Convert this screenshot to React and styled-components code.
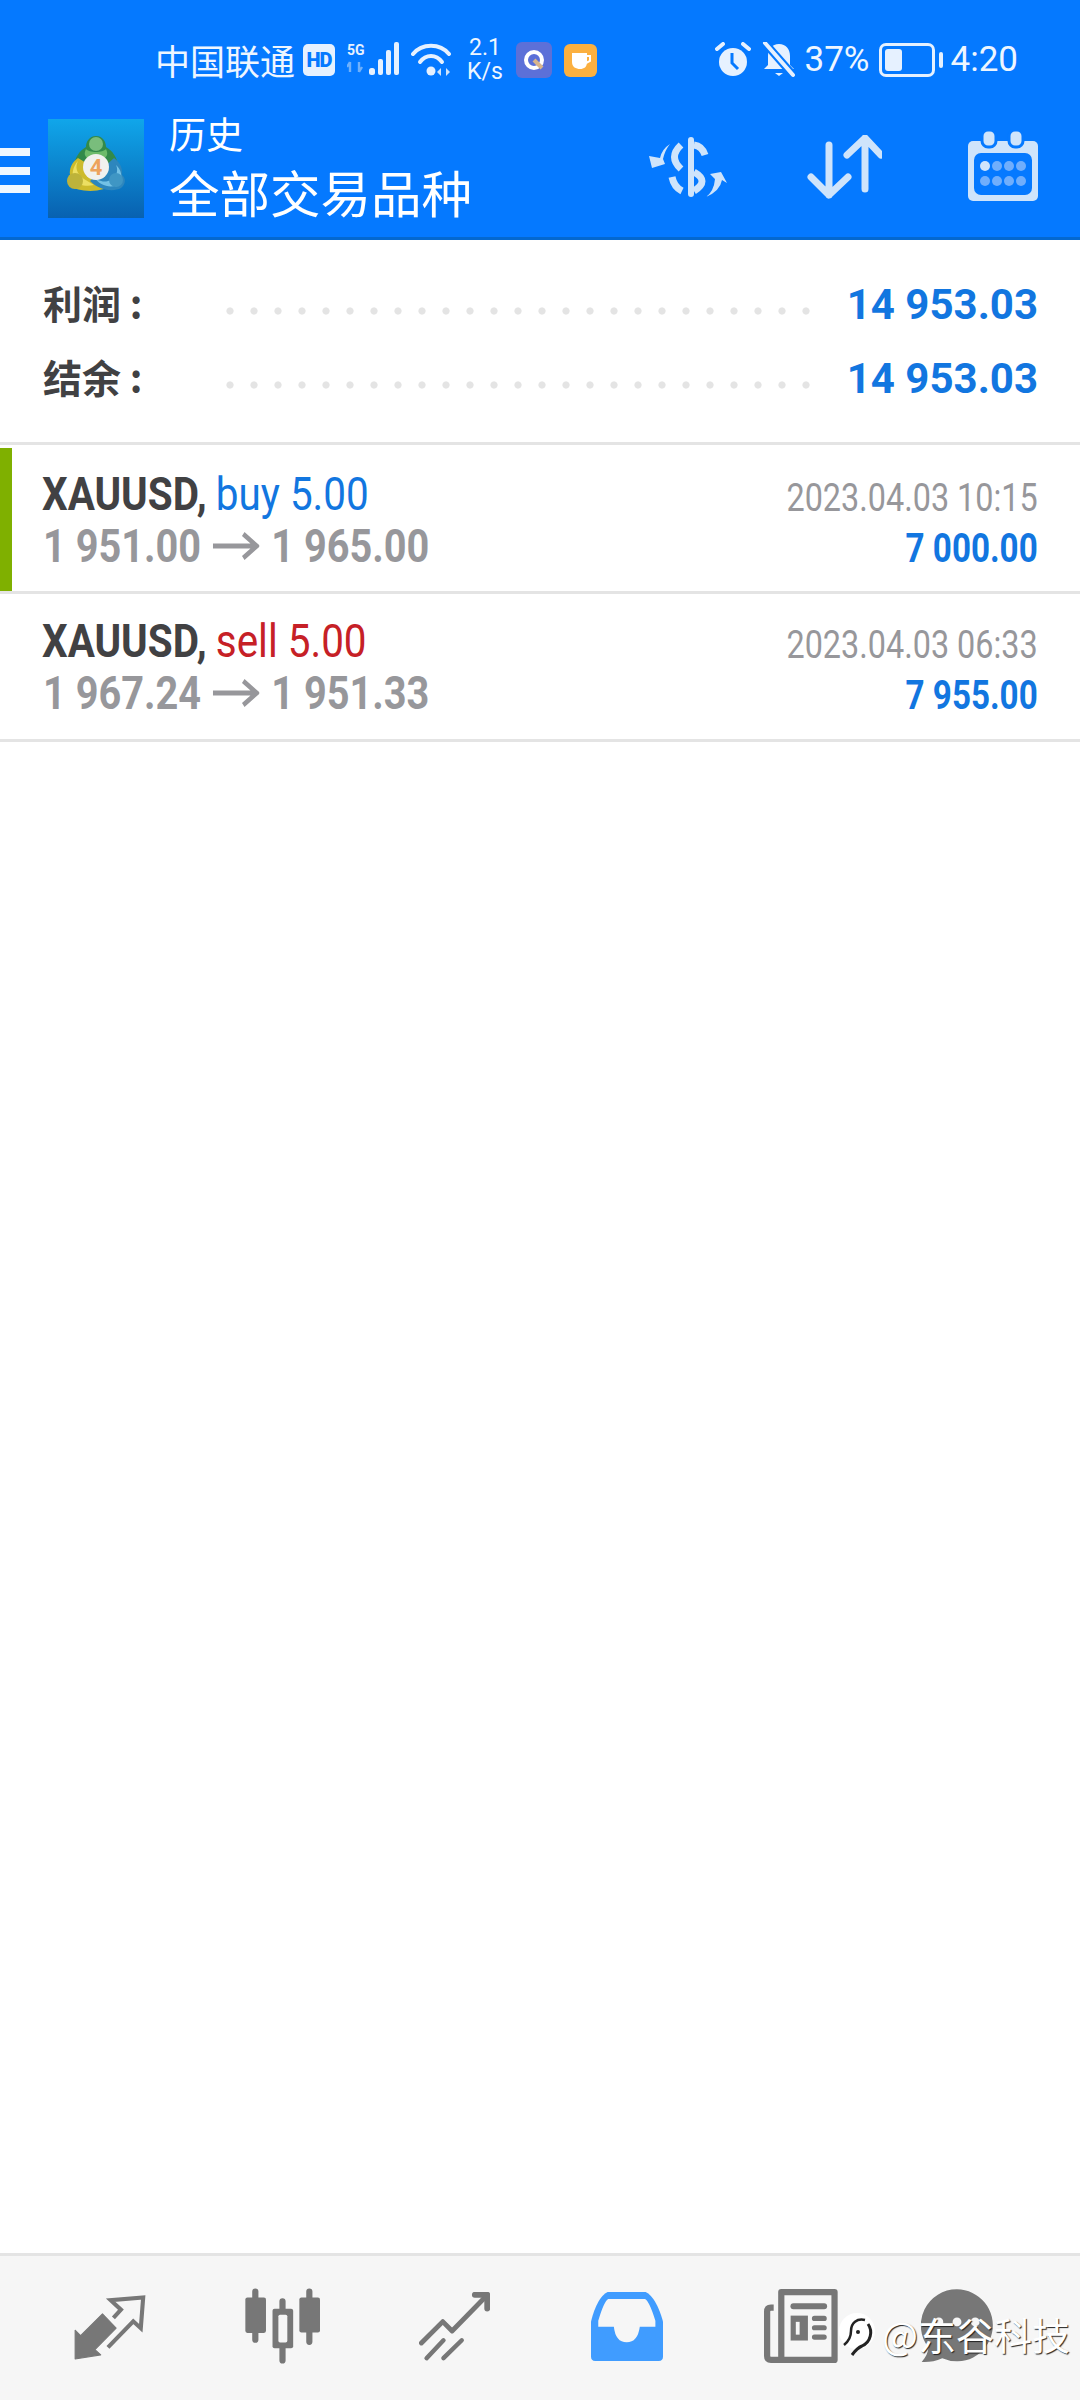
import styled, { createGlobalStyle } from "styled-components";

const Global = createGlobalStyle`
    html, body { margin: 0; padding: 0; background: #fff; }
    #root { width: 1080px; height: 2400px; }
`;

const Screen = styled.div`
    position: relative;
    width: 1080px;
    height: 2400px;
    display: flex;
    flex-direction: column;
    overflow: hidden;
    background: #fff;
    font-family: Roboto, "Noto Sans CJK SC", sans-serif;
`;

const Header = styled.header`
    background: #0579ff;
    height: 237px;
    flex: none;
    border-bottom: 3px solid #0468cf;
    color: #eef6ff;
`;

const StatusBar = styled.div`
    height: 100px;
    display: flex;
    align-items: center;
    justify-content: space-between;
    padding: 20px 62px 0 155px;
    box-sizing: border-box;
`;

const StatusGroup = styled.div`
    display: flex;
    align-items: center;
`;

const Carrier = styled.span`
    font-size: 35px;
    font-family: "Noto Sans CJK SC", sans-serif;
    line-height: 40px;
    margin-right: 8px;
`;

const HdBadge = styled.span`
    width: 32px;
    height: 32px;
    border-radius: 5px;
    background: #e6f1ff;
    color: #0579ff;
    font-size: 20px;
    font-weight: 900;
    line-height: 32px;
    text-align: center;
    letter-spacing: -1px;
`;

const Speed = styled.span`
    width: 40px;
    margin: 0 11px 0 12px;
    font-size: 23px;
    line-height: 24px;
    text-align: center;
`;

const AppIcon = styled.span`
    width: ${p => p.$size}px;
    height: ${p => p.$size}px;
    margin-left: ${p => p.$gap}px;
    border-radius: 6px;
    background: ${p => p.$bg};
    display: flex;
    align-items: center;
    justify-content: center;
`;

const StatusText = styled.span`
    font-size: 35px;
    line-height: 40px;
    margin: ${p => p.$margin};
`;

const Battery = styled.span`
    width: 56px;
    height: 34px;
    box-sizing: border-box;
    border: 3px solid #e6f1ff;
    border-radius: 7px;
    padding: 3px;
    position: relative;
    display: flex;
    &::after {
        content: "";
        position: absolute;
        right: -11px;
        top: 6px;
        width: 4px;
        height: 16px;
        border-radius: 2px;
        background: #e6f1ff;
    }
`;

const BatteryLevel = styled.span`
    width: 17px;
    background: #e6f1ff;
    border-radius: 3px;
`;

const Toolbar = styled.div`
    height: 137px;
    display: flex;
    align-items: center;
    position: relative;
`;

const Burger = styled.div`
    width: 30px;
    height: 45px;
    margin: 4px 18px 0 0;
    display: flex;
    flex-direction: column;
    justify-content: space-between;
    span {
        height: 8px;
        background: #f0f7ff;
    }
`;

const Titles = styled.div`
    margin-left: 25px;
    font-family: "Noto Sans CJK SC", sans-serif;
    color: #fff;
`;

const SubTitle = styled.div`
    font-size: 37px;
    line-height: 42px;
    margin-top: -5px;
`;

const MainTitle = styled.div`
    font-size: 50.5px;
    line-height: 58px;
    margin-top: 8px;
`;

const Actions = styled.div`
    margin-left: auto;
    display: flex;
    align-items: center;
    padding-right: 42px;
`;

const ActionIcon = styled.svg`
    display: block;
    margin-left: ${p => p.$gap}px;
    margin-top: ${p => p.$top}px;
`;

const Summary = styled.section`
    flex: none;
    padding: 27px 42px 27px;
    border-bottom: 3px solid #e4e4e4;
`;

const SummaryRow = styled.div`
    height: 74px;
    display: flex;
    align-items: center;
`;

const SummaryLabel = styled.span`
    width: 176px;
    margin-top: -5px;
    font-size: 39px;
    font-weight: 700;
    color: #414143;
    font-family: "Noto Sans CJK SC", sans-serif;
    white-space: nowrap;
    padding-left: 1px;
    box-sizing: border-box;
`;

const Dots = styled.span`
    width: 600px;
    height: 8px;
    margin-top: 14px;
    background-image: radial-gradient(circle, #e4e4e4 3.2px, transparent 4px);
    background-size: 24px 8px;
`;

const SummaryValue = styled.span`
    margin-left: auto;
    font-size: 42px;
    font-weight: 700;
    color: #1276e0;
    white-space: nowrap;
`;

const Deal = styled.article`
    position: relative;
    flex: none;
    box-sizing: border-box;
    height: ${p => (p.$first ? 149 : 148)}px;
    padding: ${p => (p.$first ? 23 : 21)}px 42px 0;
    border-bottom: 3px solid #e4e4e4;
    display: flex;
    justify-content: space-between;
    &::before {
        content: "";
        display: ${p => (p.$first ? "block" : "none")};
        position: absolute;
        left: 0;
        top: 3px;
        bottom: 0;
        width: 12px;
        background: #7fb000;
    }
`;

const DealLeft = styled.div`
    white-space: nowrap;
`;

const DealRight = styled.div`
    white-space: nowrap;
    padding-top: 7px;
    text-align: right;
`;

const SymbolLine = styled.div`
    font-size: 47px;
    line-height: 52px;
    transform: scaleX(0.86);
    transform-origin: left center;
`;

const Symbol = styled.b`
    color: #414143;
    font-weight: 700;
`;

const Side = styled.span`
    color: ${p => (p.$sell ? "#c62026" : "#1276e0")};
    margin-left: -1px;
`;

const PriceLine = styled.div`
    font-size: 47px;
    line-height: 52px;
    font-weight: 700;
    color: #97979b;
    transform: scaleX(0.845);
    transform-origin: left center;
    display: flex;
    align-items: center;
    margin-left: 1px;
`;

const PriceArrow = styled.svg`
    width: 55px;
    height: 30px;
    margin: 0 14px;
`;

const DealTime = styled.div`
    font-size: 39px;
    line-height: 46px;
    color: #97979b;
    transform: scaleX(0.83);
    transform-origin: right center;
`;

const DealProfit = styled.div`
    font-size: 40px;
    line-height: 56px;
    font-weight: 700;
    color: #1276e0;
    transform: scaleX(0.83);
    transform-origin: right center;
`;

const Spacer = styled.div`
    flex: 1;
`;

const BottomNav = styled.nav`
    flex: none;
    height: 105px;
    border-top: 3px solid #e4e4e4;
    background: #f6f6f6;
    display: grid;
    grid-template-columns: 172px 172px 172px 173px 176px 136px;
    padding: 39px 0 0 24px;
    align-items: start;
`;

const NavCell = styled.div`
    display: flex;
    justify-content: center;
`;

const NavIcon = styled.svg`
    display: block;
    margin-top: ${p => p.$top}px;
`;

const Watermark = styled.div`
    position: absolute;
    left: 838px;
    bottom: 42px;
    display: flex;
    align-items: center;
    color: #fff;
    font-family: "Noto Sans CJK SC", sans-serif;
    font-size: 38px;
    line-height: 48px;
    text-shadow: 1px 1px 1px #222;
    white-space: nowrap;
`;

const WatermarkMark = styled.svg`
    display: block;
    margin-right: 6px;
`;

const FG = "#cfe4fb";

const SignalIcon = () => (
    <svg width="56" height="36" viewBox="0 0 56 36" style={{ marginLeft: 12 }}>
        <text x="0" y="13" fontSize="14" fontWeight="700" fill="#e6f1ff" fontFamily="Roboto">5G</text>
        <path d="M3 30V20M0 25l3 -5M12 20v10M12 30l3 -5" stroke="#6fb0fb" strokeWidth="2.4" fill="none" />
        <g fill="#e6f1ff">
            <rect x="22" y="26" width="6" height="7" rx="2.5" />
            <rect x="31" y="17" width="5" height="16" rx="2" />
            <rect x="39" y="8" width="5" height="25" rx="2" />
            <rect x="47" y="0" width="5" height="33" rx="2" />
        </g>
    </svg>
);

const WifiIcon = () => (
    <svg width="42" height="36" viewBox="0 0 42 36" style={{ marginLeft: 8 }}>
        <g fill="none" stroke="#e6f1ff" strokeWidth="4" strokeLinecap="round">
            <path d="M2 12C11 1 29 1 38 12" />
            <path d="M9 20C15 12 25 12 31 20" />
        </g>
        <circle cx="20" cy="29" r="4.5" fill="#e6f1ff" />
        <path d="M30 26v8l-4 -4zM35 26v8l4 -4z" fill="#cfe4fb" />
    </svg>
);

const AlarmIcon = () => (
    <svg width="36" height="36" viewBox="0 0 36 36">
        <circle cx="18" cy="20" r="14" fill="#e6f1ff" />
        <path d="M17 11v10l6 6" stroke="#0579ff" strokeWidth="3" fill="none" />
        <path d="M2 7l6 -5M34 7l-6 -5" stroke="#e6f1ff" strokeWidth="4" strokeLinecap="round" />
    </svg>
);

const BellOffIcon = () => (
    <svg width="34" height="36" viewBox="0 0 34 36" style={{ marginLeft: 11 }}>
        <path d="M17 2c7 0 11 5 11 12v9l4 4H2l4-4v-9C6 7 10 2 17 2z" fill="#e6f1ff" />
        <path d="M13 31h8l-4 3z" fill="#e6f1ff" />
        <path d="M3 1l28 32" stroke="#0579ff" strokeWidth="8" />
        <path d="M3 1l28 32" stroke="#e6f1ff" strokeWidth="4" strokeLinecap="round" />
    </svg>
);

const LogoIcon = () => (
    <svg width="96" height="99" viewBox="0 0 96 99">
        <defs>
            <linearGradient id="logoBg" x1="0" y1="0" x2="0" y2="1">
                <stop offset="0" stopColor="#10a6ea" />
                <stop offset="1" stopColor="#0861b0" />
            </linearGradient>
        </defs>
        <rect width="96" height="99" fill="url(#logoBg)" />
        <path d="M48 17C55 17 58 23 58 28C65 32 69 39 70 46L48 55L26 46C27 39 31 32 38 28C38 23 41 17 48 17Z" fill="#338a4a" />
        <path d="M38 30C35 36 37 40 48 42C59 40 61 36 58 30C55 34 41 34 38 30Z" fill="#6dbb6a" />
        <circle cx="48" cy="25" r="7" fill="#79bd7c" />
        <path d="M30 39C24 43 21 50 22 56C19 58 19 64 22 67C28 71 42 74 56 70L48 50Z" fill="#cdbb2c" />
        <path d="M30 42C27 48 28 54 36 60L46 66C38 68 30 66 26 62C23 56 25 47 30 42Z" fill="#ecdf62" />
        <circle cx="27" cy="62" r="8" fill="#bdb33a" />
        <path d="M66 39C72 43 75 50 74 56C78 59 78 65 73 69C66 73 52 72 42 62L54 50Z" fill="#2d86bd" />
        <path d="M68 46C71 52 68 60 60 62C54 64 48 60 46 58C52 68 66 70 72 64C75 58 73 50 68 46Z" fill="#73c1e6" />
        <circle cx="68" cy="61" r="7" fill="#3f96c4" />
        <circle cx="48" cy="48" r="13" fill="#f1f1ee" />
        <text x="48" y="56" fontSize="22" fontWeight="700" textAnchor="middle" fill="#eda35c" fontFamily="Roboto">4</text>
    </svg>
);

const Deals = [
    { side: "buy 5.00", from: "1 951.00", to: "1 965.00", time: "2023.04.03 10:15", profit: "7 000.00", first: true },
    { side: "sell 5.00", from: "1 967.24", to: "1 951.33", time: "2023.04.03 06:33", profit: "7 955.00", sell: true },
];

const App = () => {
    return (
        <Screen>
            <Global />
            <Header>
                <StatusBar>
                    <StatusGroup>
                        <Carrier>中国联通</Carrier>
                        <HdBadge>HD</HdBadge>
                        <SignalIcon />
                        <WifiIcon />
                        <Speed>2.1<br />K/s</Speed>
                        <AppIcon $size={36} $gap={0} $bg="#5c70d8">
                            <svg width="24" height="24" viewBox="0 0 24 24">
                                <circle cx="12" cy="12" r="8" fill="none" stroke="#fff" strokeWidth="4" />
                                <path d="M12 12l8 8" stroke="#d8b58c" strokeWidth="4" />
                            </svg>
                        </AppIcon>
                        <AppIcon $size={33} $gap={12} $bg="#fbb040">
                            <svg width="24" height="24" viewBox="0 0 24 24">
                                <path d="M3 5h15v9c0 5-3 7-7 7s-8-2-8-7z" fill="#fff" />
                                <path d="M18 8h3v5l-4 2" stroke="#fff" strokeWidth="2" fill="none" />
                            </svg>
                        </AppIcon>
                    </StatusGroup>
                    <StatusGroup>
                        <AlarmIcon />
                        <BellOffIcon />
                        <StatusText $margin="0 9px 0 9px">37%</StatusText>
                        <Battery><BatteryLevel /></Battery>
                        <StatusText $margin="0 0 0 16px">4:20</StatusText>
                    </StatusGroup>
                </StatusBar>
                <Toolbar>
                    <Burger><span /><span /><span /></Burger>
                    <LogoIcon />
                    <Titles>
                        <SubTitle>历史</SubTitle>
                        <MainTitle>全部交易品种</MainTitle>
                    </Titles>
                    <Actions>
                        <ActionIcon $gap={0} $top={-3} width="80" height="64" viewBox="0 0 80 64">
                            <rect x="40" y="2" width="6" height="60" rx="3" fill={FG} />
                            <g fill="none" stroke={FG} strokeWidth="7">
                                <path d="M46 10Q54 11 57 20" />
                                <path d="M33 10Q20 22 33 34" />
                                <path d="M24 42Q26 52 34 56" />
                                <path d="M46 37Q62 46 46 56" />
                            </g>
                            <path d="M22 9Q14 14 12 23L1 21L4 33L17 29L15 24Q17 15 22 9Z" fill={FG} />
                            <path d="M58 62Q66 56 67 44L62 39L73 37L79 48L74 45Q72 56 58 62Z" fill={FG} />
                        </ActionIcon>
                        <ActionIcon $gap={78} $top={-3} width="76" height="64" viewBox="0 0 76 64" fill="none" stroke={FG} strokeWidth="7" strokeLinecap="round" strokeLinejoin="round">
                            <path d="M23 10V60M5 42L23 60L42 42" />
                            <path d="M59 3V54M41 20L59 3L75 20" />
                        </ActionIcon>
                        <ActionIcon $gap={86} $top={-6} width="70" height="72" viewBox="0 0 70 72">
                            <rect x="0" y="11" width="70" height="60" rx="5" fill={FG} />
                            <rect x="6" y="23" width="58" height="42" rx="7" fill="#0579ff" />
                            <g stroke="#0579ff" strokeWidth="3" fill={FG}>
                                <rect x="14" y="0" width="14" height="17" rx="6" />
                                <rect x="41" y="0" width="14" height="17" rx="6" />
                            </g>
                            <circle cx="17" cy="36" r="5" fill={FG} />
                            <g fill="#70aefc">
                                <circle cx="29" cy="36" r="5" />
                                <circle cx="41" cy="36" r="5" />
                                <circle cx="53" cy="36" r="5" />
                                <circle cx="17" cy="51" r="5" />
                                <circle cx="29" cy="51" r="5" />
                                <circle cx="41" cy="51" r="5" />
                                <circle cx="53" cy="51" r="5" />
                            </g>
                        </ActionIcon>
                    </Actions>
                </Toolbar>
            </Header>

            <Summary>
                <SummaryRow>
                    <SummaryLabel>利润 :</SummaryLabel>
                    <Dots />
                    <SummaryValue>14 953.03</SummaryValue>
                </SummaryRow>
                <SummaryRow>
                    <SummaryLabel>结余 :</SummaryLabel>
                    <Dots />
                    <SummaryValue>14 953.03</SummaryValue>
                </SummaryRow>
            </Summary>

            {Deals.map(d => (
                <Deal key={d.time} $first={d.first}>
                    <DealLeft>
                        <SymbolLine>
                            <Symbol>XAUUSD,</Symbol> <Side $sell={d.sell}>{d.side}</Side>
                        </SymbolLine>
                        <PriceLine>
                            <span>{d.from}</span>
                            <PriceArrow viewBox="0 0 55 30" fill="none" stroke="#97979b" strokeWidth="5">
                                <path d="M0 15H52M36 3L52 15L36 27" />
                            </PriceArrow>
                            <span>{d.to}</span>
                        </PriceLine>
                    </DealLeft>
                    <DealRight>
                        <DealTime>{d.time}</DealTime>
                        <DealProfit>{d.profit}</DealProfit>
                    </DealRight>
                </Deal>
            ))}

            <Spacer />

            <BottomNav>
                <NavCell>
                    <NavIcon $top={0} width="72" height="65" viewBox="215 165 210 190" fill="#777">
                        <path d="M218 268L234 284L298 220L338 262L276 325L293 340L218 352Z" stroke="#777" strokeWidth="3" strokeLinejoin="round" />
                        <path d="M330 232L352 208L322 180L417 172L410 262L388 242L314 318" fill="none" stroke="#777" strokeWidth="12" />
                    </NavIcon>
                </NavCell>
                <NavCell>
                    <NavIcon $top={-7} width="75" height="76" viewBox="708 148 218 220">
                        <path d="M738 158V298M817 186V358M895 158V304" stroke="#777" strokeWidth="18" strokeLinecap="round" />
                        <rect x="709" y="175" width="60" height="103" rx="6" fill="#777" />
                        <rect x="866" y="175" width="60" height="102" rx="6" fill="#777" />
                        <rect x="788" y="208" width="60" height="115" rx="6" fill="#777" />
                        <rect x="805" y="225" width="26" height="81" rx="5" fill="#f6f6f6" />
                    </NavIcon>
                </NavCell>
                <NavCell>
                    <NavIcon $top={-3} width="71" height="70" viewBox="1214 155 206 203" fill="none" stroke="#777" strokeLinecap="round" strokeLinejoin="round">
                        <path d="M1221 303L1283 241L1310 268L1410 166" strokeWidth="14" />
                        <path d="M1376 163H1412V203" strokeWidth="17" />
                        <path d="M1236 347L1285 295M1285 347L1338 295" strokeWidth="13" />
                    </NavIcon>
                </NavCell>
                <NavCell>
                    <NavIcon $top={-3} width="72" height="69" viewBox="147 155 208 199">
                        <path d="M147 240Q165 170 195 155H305Q335 170 355 240V342Q355 354 343 354H159Q147 354 147 342Z" fill="#409cff" />
                        <path d="M197 175H303Q315 180 333 238V255H288Q282 300 250 300Q218 300 213 255H168V238Q185 180 197 175Z" fill="#f6f6f6" />
                    </NavIcon>
                </NavCell>
                <NavCell>
                    <NavIcon $top={-6} width="74" height="74" viewBox="648 148 214 214">
                        <path d="M676 202H668Q657 202 657 214V342Q657 353 668 353H852V157H698V353" fill="none" stroke="#777" strokeWidth="18" strokeLinejoin="round" />
                        <path d="M733 198H822" stroke="#777" strokeWidth="17" strokeLinecap="round" />
                        <path d="M794 233H822M794 260H822M794 287H822" stroke="#777" strokeWidth="15" strokeLinecap="round" />
                        <rect x="725" y="225" width="50" height="72" fill="#777" />
                        <rect x="740" y="243" width="11" height="37" fill="#f6f6f6" />
                    </NavIcon>
                </NavCell>
                <NavCell>
                    <NavIcon $top={-6} width="72" height="74" viewBox="1108 148 210 214">
                        <path d="M1213 148A105 105 0 1 1 1170 349Q1140 362 1110 360Q1128 340 1130 318A105 105 0 0 1 1213 148Z" fill="#777" />
                        <circle cx="1160" cy="243" r="13" fill="#f6f6f6" />
                        <circle cx="1213" cy="243" r="13" fill="#f6f6f6" />
                        <circle cx="1266" cy="243" r="13" fill="#f6f6f6" />
                    </NavIcon>
                </NavCell>
            </BottomNav>

            <Watermark>
                <WatermarkMark width="38" height="46" viewBox="0 0 38 46">
                    <circle cx="19" cy="20" r="18" fill="#fff" />
                    <path d="M6 34C11 30 13 26 13 20C13 12 19 7 27 9" fill="none" stroke="#222" strokeWidth="2.5" />
                    <path d="M30 13C35 20 33 31 24 35C19 37 17 40 14 44" fill="none" stroke="#222" strokeWidth="3" />
                    <circle cx="20" cy="21" r="2" fill="#222" />
                </WatermarkMark>
                <span>@东谷科技</span>
            </Watermark>
        </Screen>
    );
};

export default App;
